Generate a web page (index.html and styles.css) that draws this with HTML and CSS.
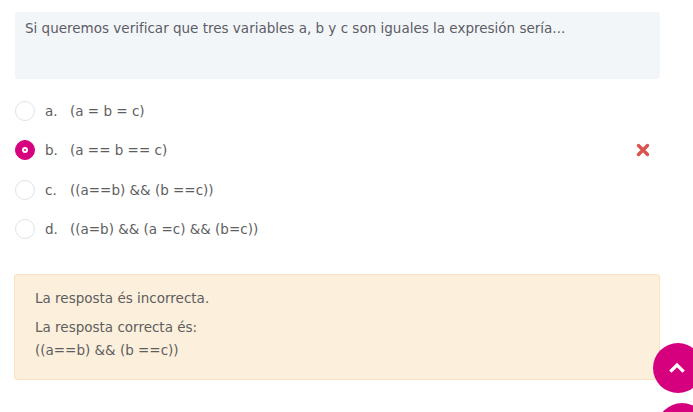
FILE: index.html
```html
<!DOCTYPE html>
<html lang="es">
<head>
<meta charset="utf-8">
<link rel="stylesheet" href="styles.css">
</head>
<body>
<div class="page">
  <div class="qtext">Si queremos verificar que tres variables a, b y c son iguales la expresión sería...</div>
  <div class="answers">
    <div class="opt"><span class="radio"></span><span class="letter">a.</span><span class="txt">(a = b = c)</span></div>
    <div class="opt"><span class="radio on"></span><span class="letter">b.</span><span class="txt">(a == b == c)</span>
      <svg class="wrong" viewBox="0 0 14 14" width="14" height="14"><path d="M2.5 2.5 L11.5 11.5 M11.5 2.5 L2.5 11.5" stroke="#d9534f" stroke-width="3.4" stroke-linecap="round"/></svg>
    </div>
    <div class="opt"><span class="radio"></span><span class="letter">c.</span><span class="txt">((a==b) &amp;&amp; (b ==c))</span></div>
    <div class="opt"><span class="radio"></span><span class="letter">d.</span><span class="txt">((a=b) &amp;&amp; (a =c) &amp;&amp; (b=c))</span></div>
  </div>
  <div class="feedback">
    <p class="fb1">La resposta és incorrecta.</p>
    <p class="fb2">La resposta correcta és:<br>((a==b) &amp;&amp; (b ==c))</p>
  </div>
</div>
<div class="fab">
  <a class="totop"><svg viewBox="0 0 16 12" width="16" height="12"><path d="M2.5 9.5 L8 4 L13.5 9.5" fill="none" stroke="#fff" stroke-width="3.2" stroke-linecap="square"/></svg></a>
  <a class="next"></a>
</div>
</body>
</html>
```
FILE: styles.css
```css
html, body { margin: 0; padding: 0; background: #fff; overflow: hidden; }
body { font-family: "DejaVu Sans", sans-serif; color: #5e5e5e; font-size: 13.5px; width: 693px; height: 412px; position: relative; }
.page { padding: 12px 33px 0 15px; }
.qtext { background: #f3f6f9; border-radius: 3px; height: 67px; box-sizing: border-box; padding: 6px 10px; line-height: 20px; color: #5c5c66; }
.answers { padding-top: 22px; display: flex; flex-direction: column; gap: 19.3px; }
.opt { display: flex; align-items: center; height: 20px; }
.radio { width: 18px; height: 18px; border: 1px solid #dfe3e6; border-radius: 50%; box-sizing: content-box; flex: none; }
.radio.on { background: #d6007f; border-color: #d6007f; position: relative; }
.radio.on::after { content: ""; position: absolute; left: 6px; top: 6px; width: 2px; height: 2px; border: 2px solid #fff; border-radius: 50%; background: #d6007f; }
.letter { margin-left: 10px; width: 25px; }
.wrong { margin-left: auto; margin-right: 10px; }
.feedback { margin-top: 35px; margin-left: -1px; background: #fcefdc; border: 1px solid #f8e2bf; border-radius: 3px; height: 106px; box-sizing: border-box; padding: 12px 20px; }
.feedback p { margin: 0; line-height: 23px; }
.fb2 { margin-top: 6px !important; }
.fab { position: absolute; left: 653px; top: 343px; width: 40px; height: 69px; overflow: hidden; }
.totop { position: absolute; left: 0; top: 0; width: 50px; height: 50px; border-radius: 50%; background: #d6007f; display: flex; align-items: center; justify-content: center; }
.totop svg { margin-left: -2px; margin-top: -2px; }
.next { position: absolute; left: 4px; top: 60px; width: 50px; height: 50px; border-radius: 50%; background: #d6007f; }
```
